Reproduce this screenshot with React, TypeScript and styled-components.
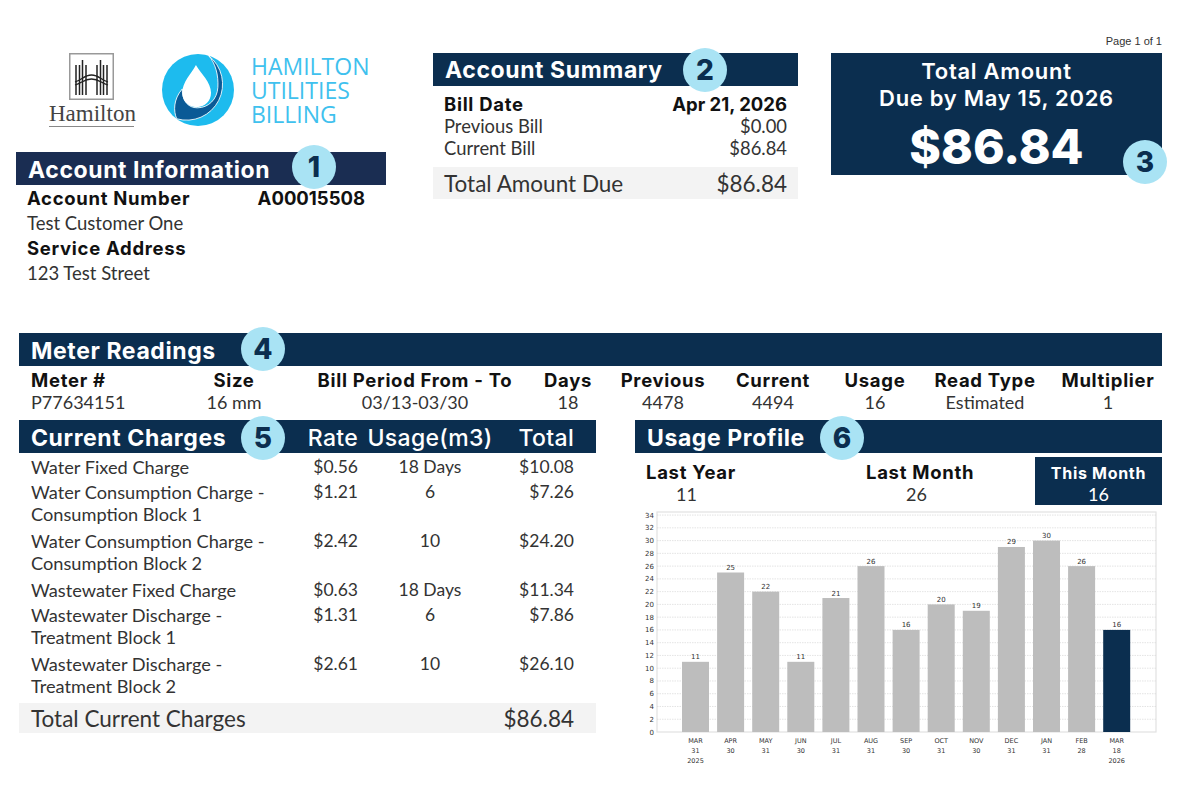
import React from "react"
import styled, { createGlobalStyle } from "styled-components"

const navy = "#0b2e4f"
const heading = `"Inter", "Open Sans", "Liberation Sans", sans-serif`

const GlobalStyle = createGlobalStyle`
  html, body {
    margin: 0;
    padding: 0;
    background: #fff;
  }
  body {
    font-family: "Lato", "Liberation Sans", sans-serif;
    color: #333;
  }
`

const Page = styled.div`
  width: 1200px;
  height: 789px;
  box-sizing: border-box;
  padding: 35px 38px 0 16px;
  overflow: hidden;
`

const TopSection = styled.section`
  display: grid;
  grid-template-columns: 417px 398px 331px;
  height: 298px;
`

const Column = styled.div<{ $width: number }>`
  width: ${({ $width }) => $width}px;
  padding-top: 18px;
`

const LogoRow = styled.div`
  display: flex;
  align-items: flex-start;
  height: 99px;
  padding-left: 33px;
`

const CityLogo = styled.div`
  display: flex;
  flex-direction: column;
  align-items: center;
  width: 85px;
  margin-right: 28px;
`

const CityName = styled.div`
  width: 85px;
  margin-top: 2px;
  border-bottom: 1px solid #888;
  font-family: "Liberation Serif", serif;
  font-size: 23px;
  line-height: 24px;
  text-align: center;
  color: #444;
`

const BrandName = styled.div`
  margin: 1px 0 0 17px;
  font-family: "Open Sans", sans-serif;
  font-weight: 400;
  font-size: 23px;
  line-height: 24px;
  color: #3fc1ee;
`

const Bar = styled.header<{ $tone?: string }>`
  position: relative;
  display: flex;
  align-items: center;
  box-sizing: border-box;
  height: 33px;
  padding: 3px 0 0 12px;
  background: ${({ $tone }) => $tone || navy};
  color: #fff;
  font-family: ${heading};
  font-weight: 700;
  font-size: 23px;
  letter-spacing: 0.6px;
`

const SummaryBar = styled(Bar)`
  padding-top: 0;
`

const Badge = styled.span<{ $left: number; $top: number }>`
  position: absolute;
  left: ${({ $left }) => $left}px;
  top: ${({ $top }) => $top}px;
  display: flex;
  align-items: center;
  justify-content: center;
  width: 44px;
  height: 44px;
  border-radius: 50%;
  background: #a9e3f4;
  color: ${navy};
  font-family: ${heading};
  font-weight: 800;
  font-size: 28px;
  letter-spacing: 0;
`

const InfoList = styled.div`
  padding: 1px 21px 0 11px;
`

const strongText = `
  font-family: ${heading};
  font-weight: 700;
  font-size: 18.5px;
  letter-spacing: 0.7px;
  color: #111;
`

const InfoRow = styled.div<{ $strong?: boolean }>`
  display: flex;
  justify-content: space-between;
  height: 25px;
  line-height: 25px;
  font-size: 18.5px;
  ${({ $strong }) => $strong && strongText}
`

const StrongValue = styled.span`
  letter-spacing: 0;
`

const SummaryList = styled.div`
  padding: 7px 11px 0;
`

const SummaryRow = styled.div<{ $strong?: boolean }>`
  display: flex;
  justify-content: space-between;
  height: 22px;
  line-height: 22px;
  font-size: 18.4px;
  ${({ $strong }) => $strong && strongText}
`

const TotalStrip = styled.div`
  display: flex;
  justify-content: space-between;
  align-items: center;
  height: 32px;
  background: #f3f3f3;
  font-size: 22.5px;
`

const SummaryTotal = styled(TotalStrip)`
  margin-top: 8px;
  padding: 0 11px;
`

const PageLabel = styled.div`
  height: 18px;
  font-family: "Liberation Sans", sans-serif;
  font-size: 11px;
  line-height: 12px;
  text-align: right;
  color: #333;
`

const DueBox = styled.div`
  position: relative;
  display: flex;
  flex-direction: column;
  align-items: center;
  height: 122px;
  box-sizing: border-box;
  padding-top: 5px;
  background: ${navy};
  color: #fff;
  font-family: ${heading};
  font-weight: 600;
  font-size: 22px;
  letter-spacing: 0.7px;
  line-height: 27px;
  text-align: center;
`

const DueAmount = styled.div`
  margin-top: 10px;
  font-weight: 800;
  font-size: 48px;
  letter-spacing: 0;
  line-height: 50px;
`

const MeterSection = styled.section`
  margin-left: 3px;
`

const MeterGrid = styled.div`
  display: grid;
  grid-template-columns: 129px 148px 214px 92px 98px 122px 82px 138px 108px;
  padding: 2px 0 0 12px;
  text-align: center;
  & > :nth-child(9n + 1) {
    text-align: left;
  }
`

const MeterHead = styled.div`
  height: 24px;
  line-height: 24px;
  white-space: nowrap;
  ${strongText}
`

const MeterCell = styled.div`
  height: 20px;
  line-height: 20px;
  font-size: 18px;
`

const LowerSection = styled.section`
  display: grid;
  grid-template-columns: 577px 527px;
  column-gap: 39px;
  margin: 8px 0 0 3px;
`

const ChargeHead = styled(Bar)`
  display: grid;
  grid-template-columns: 266px 61px 144px 72px;
`

const ChargeHeadCell = styled.span<{ $align: string }>`
  font-weight: 500;
  letter-spacing: 0.3px;
  white-space: nowrap;
  text-align: ${({ $align }) => $align};
  justify-self: ${({ $align }) => ($align === "right" ? "end" : "center")};
`

const ChargeRows = styled.div`
  padding-top: 3px;
`

const ChargeRow = styled.div<{ $wrapped?: boolean }>`
  display: grid;
  grid-template-columns: 266px 61px 144px 72px;
  padding: 0 0 ${({ $wrapped }) => ($wrapped ? 5 : 3)}px 12px;
  font-size: 17.5px;
  line-height: 22px;
`

const ChargeName = styled.span`
  font-size: 18.2px;
`

const Rate = styled.span`
  text-align: right;
`

const Usage = styled.span`
  text-align: center;
`

const Amount = styled.span`
  text-align: right;
`

const ChargesTotal = styled(TotalStrip)`
  margin-top: 1px;
  height: 30px;
  padding: 0 22px 0 12px;
`

const Stats = styled.div`
  display: grid;
  grid-template-columns: 110px 290px 127px;
  box-sizing: border-box;
  height: 52px;
  padding-top: 4px;
`

const Stat = styled.div`
  padding: 3px 0 0 11px;
  line-height: 24px;
  white-space: nowrap;
  ${strongText}
`

const LastMonth = styled(Stat)`
  padding-left: 121px;
`

const StatValue = styled.div<{ $indent: number }>`
  padding-left: ${({ $indent }) => $indent}px;
  font-family: "Lato", sans-serif;
  font-weight: 400;
  font-size: 18px;
  letter-spacing: 0;
  line-height: 20px;
  color: #333;
`

const ThisMonth = styled.div`
  height: 48px;
  box-sizing: border-box;
  padding-top: 4px;
  background: ${navy};
  color: #fff;
  font-family: ${heading};
  font-weight: 700;
  font-size: 16px;
  letter-spacing: 0.7px;
  line-height: 24px;
  text-align: center;
`

const ThisMonthValue = styled.div`
  font-family: "Lato", sans-serif;
  font-weight: 400;
  font-size: 18px;
  letter-spacing: 0;
  line-height: 18px;
`

const HamiltonMark = () => (
  <svg width="45" height="47" viewBox="0 0 45 47" fill="none">
    <rect x="0.75" y="0.75" width="43.5" height="45.5" fill="#fff" stroke="#999" strokeWidth="1.5" />
    <g stroke="#222" strokeWidth="1.5">
      <path d="M7 12V42M10.5 12V42M13.5 7V42M17 12V42" />
      <path d="M28 12V42M31.5 7V42M34.5 12V42M38 12V42" />
    </g>
    <g stroke="#222" strokeWidth="1.3">
      <path d="M6 29C13 27 15 22 22.5 22C30 22 32 27 39 29" />
      <path d="M6 32C13 30 15 26 22.5 26C30 26 32 30 39 32" />
    </g>
  </svg>
)

const WaterMark = () => (
  <svg width="72" height="74" viewBox="29 33 210 210">
    <circle cx="134" cy="138" r="105" fill="#1dbbee" />
    <path
      d="M165 38A105 105 0 0 1 72 222C62 200 62 165 88 135C88 170 105 190 132 190C165 190 190 165 192 130C194 95 185 60 165 38Z"
      fill="#0a5a96"
      stroke="#fff"
      strokeWidth="2.5"
    />
    <path
      d="M128 65C115 90 88 115 88 146C88 170 106 188 130 188C154 188 172 170 172 146C172 115 142 90 128 65Z"
      fill="#fff"
    />
  </svg>
)

const usage = [
  { month: "MAR", days: 31, year: "2025", value: 11 },
  { month: "APR", days: 30, value: 25 },
  { month: "MAY", days: 31, value: 22 },
  { month: "JUN", days: 30, value: 11 },
  { month: "JUL", days: 31, value: 21 },
  { month: "AUG", days: 31, value: 26 },
  { month: "SEP", days: 30, value: 16 },
  { month: "OCT", days: 31, value: 20 },
  { month: "NOV", days: 30, value: 19 },
  { month: "DEC", days: 31, value: 29 },
  { month: "JAN", days: 31, value: 30 },
  { month: "FEB", days: 28, value: 26 },
  { month: "MAR", days: 18, year: "2026", value: 16 },
]

const ChartFrame = styled.div`
  width: 527px;
  height: 260px;
`

const UsageChart = () => {
  // svg origin sits at page x=635, y=505
  const left = 22
  const right = 521
  const top = 7
  const base = 227
  const unit = 6.38
  const ticks = Array.from({ length: 18 }, (_, i) => i * 2)
  return (
    <ChartFrame>
      <svg width="527" height="260" fontFamily="DejaVu Sans, sans-serif" fontSize="7" fill="#333">
        <rect x={left} y={top} width={right - left} height={base - top} fill="#fff" stroke="#e2e2e2" strokeWidth="1.2" />
        {ticks.map(t => (
          <g key={t}>
            {t > 0 && (
              <line
                x1={left}
                x2={right}
                y1={base - t * unit}
                y2={base - t * unit}
                stroke="#d8d8d8"
                strokeWidth="0.7"
                strokeDasharray="1.5 1"
              />
            )}
            <text x={left - 3} y={base - t * unit + 2.5} textAnchor="end">
              {t}
            </text>
          </g>
        ))}
        {usage.map((d, i) => {
          const x = 47 + i * 35.1
          const h = d.value * unit
          const mid = x + 13.5
          return (
            <g key={i}>
              <rect x={x} y={base - h} width="27" height={h} fill={i === usage.length - 1 ? navy : "#bdbdbd"} />
              <text x={mid} y={base - h - 2.5} textAnchor="middle">
                {d.value}
              </text>
              <text x={mid} y={base + 11} textAnchor="middle" fontSize="6.5">
                {d.month}
              </text>
              <text x={mid} y={base + 21} textAnchor="middle" fontSize="6.5">
                {d.days}
              </text>
              {d.year && (
                <text x={mid} y={base + 31} textAnchor="middle" fontSize="6.5">
                  {d.year}
                </text>
              )}
            </g>
          )
        })}
      </svg>
    </ChartFrame>
  )
}

const charges = [
  { name: ["Water Fixed Charge"], rate: "$0.56", usage: "18 Days", total: "$10.08" },
  { name: ["Water Consumption Charge -", "Consumption Block 1"], rate: "$1.21", usage: "6", total: "$7.26" },
  { name: ["Water Consumption Charge -", "Consumption Block 2"], rate: "$2.42", usage: "10", total: "$24.20" },
  { name: ["Wastewater Fixed Charge"], rate: "$0.63", usage: "18 Days", total: "$11.34" },
  { name: ["Wastewater Discharge -", "Treatment Block 1"], rate: "$1.31", usage: "6", total: "$7.86" },
  { name: ["Wastewater Discharge -", "Treatment Block 2"], rate: "$2.61", usage: "10", total: "$26.10" },
]

const meterHeads = ["Meter #", "Size", "Bill Period From - To", "Days", "Previous", "Current", "Usage", "Read Type", "Multiplier"]
const meterValues = ["P77634151", "16 mm", "03/13-03/30", "18", "4478", "4494", "16", "Estimated", "1"]

export default function App() {
  return (
    <Page>
      <GlobalStyle />
      <TopSection>
        <Column $width={370}>
          <LogoRow>
            <CityLogo>
              <HamiltonMark />
              <CityName>Hamilton</CityName>
            </CityLogo>
            <WaterMark />
            <BrandName>
              HAMILTON
              <br />
              UTILITIES
              <br />
              BILLING
            </BrandName>
          </LogoRow>
          <Bar $tone="#1a2d52">
            Account Information
            <Badge $left={276} $top={-7}>1</Badge>
          </Bar>
          <InfoList>
            <InfoRow $strong>
              <span>Account Number</span>
              <StrongValue>A00015508</StrongValue>
            </InfoRow>
            <InfoRow>Test Customer One</InfoRow>
            <InfoRow $strong>Service Address</InfoRow>
            <InfoRow>123 Test Street</InfoRow>
          </InfoList>
        </Column>
        <Column $width={365}>
          <SummaryBar>
            Account Summary
            <Badge $left={250} $top={-5}>2</Badge>
          </SummaryBar>
          <SummaryList>
            <SummaryRow $strong>
              <span>Bill Date</span>
              <StrongValue>Apr 21, 2026</StrongValue>
            </SummaryRow>
            <SummaryRow>
              <span>Previous Bill</span>
              <span>$0.00</span>
            </SummaryRow>
            <SummaryRow>
              <span>Current Bill</span>
              <span>$86.84</span>
            </SummaryRow>
          </SummaryList>
          <SummaryTotal>
            <span>Total Amount Due</span>
            <span>$86.84</span>
          </SummaryTotal>
        </Column>
        <div>
          <PageLabel>Page 1 of 1</PageLabel>
          <DueBox>
            Total Amount
            <br />
            Due by May 15, 2026
            <DueAmount>$86.84</DueAmount>
            <Badge $left={292} $top={87}>3</Badge>
          </DueBox>
        </div>
      </TopSection>

      <MeterSection>
        <Bar>
          Meter Readings
          <Badge $left={222} $top={-6}>4</Badge>
        </Bar>
        <MeterGrid>
          {meterHeads.map(h => (
            <MeterHead key={h}>{h}</MeterHead>
          ))}
          {meterValues.map(v => (
            <MeterCell key={v}>{v}</MeterCell>
          ))}
        </MeterGrid>
      </MeterSection>

      <LowerSection>
        <div>
          <ChargeHead>
            <span>Current Charges</span>
            <ChargeHeadCell $align="right">Rate</ChargeHeadCell>
            <ChargeHeadCell $align="center">Usage(m3)</ChargeHeadCell>
            <ChargeHeadCell $align="right">Total</ChargeHeadCell>
            <Badge $left={222} $top={-4}>5</Badge>
          </ChargeHead>
          <ChargeRows>
            {charges.map(c => (
              <ChargeRow key={c.name.join()} $wrapped={c.name.length > 1}>
                <ChargeName>
                  {c.name[0]}
                  {c.name[1] && <br />}
                  {c.name[1]}
                </ChargeName>
                <Rate>{c.rate}</Rate>
                <Usage>{c.usage}</Usage>
                <Amount>{c.total}</Amount>
              </ChargeRow>
            ))}
          </ChargeRows>
          <ChargesTotal>
            <span>Total Current Charges</span>
            <span>$86.84</span>
          </ChargesTotal>
        </div>
        <div>
          <Bar>
            Usage Profile
            <Badge $left={185} $top={-4}>6</Badge>
          </Bar>
          <Stats>
            <Stat>
              Last Year
              <StatValue $indent={30}>11</StatValue>
            </Stat>
            <LastMonth>
              Last Month
              <StatValue $indent={40}>26</StatValue>
            </LastMonth>
            <ThisMonth>
              This Month
              <ThisMonthValue>16</ThisMonthValue>
            </ThisMonth>
          </Stats>
          <UsageChart />
        </div>
      </LowerSection>
    </Page>
  )
}
